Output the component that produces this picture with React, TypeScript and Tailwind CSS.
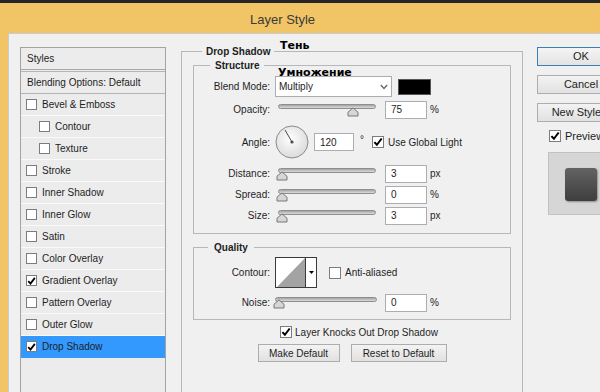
import React from "react";

const Check = ({ checked, size = 12 }: { checked?: boolean; size?: number }) => (
  <span
    className={`flex shrink-0 items-center justify-center border border-[#7c7c7c] bg-white ${
      size === 11 ? "h-[11px] w-[11px]" : "h-[12px] w-[12px]"
    }`}
  >
    {checked && (
      <svg width="10" height="10" viewBox="0 0 10 10">
        <path d="M1.4 5.1 L3.9 7.8 L8.7 1.5" fill="none" stroke="#000" strokeWidth="2" />
      </svg>
    )}
  </span>
);

const Slider = ({ pos, wide }: { pos: number; wide?: boolean }) => (
  <div className={`relative h-[13px] ${wide ? "w-[102px]" : "w-[98px]"}`}>
    <div className="mt-[1px] h-[5px] rounded-full border border-[#8e8e8e] bg-gradient-to-b from-[#a4a4a4] to-[#dcdcdc]" />
    <svg className="absolute top-[3px]" style={{ left: pos }} width="12" height="10" viewBox="0 0 12 10">
      <path d="M1 9 L1 5.2 L6 0.9 L11 5.2 L11 9 Z" fill="#d6d6d6" stroke="#777" strokeWidth="1" strokeLinejoin="round" />
    </svg>
  </div>
);

const Field = ({ value, wide }: { value: string; wide?: boolean }) => (
  <div
    className={`flex h-[18px] items-center border border-[#abadb3] bg-white pl-[5px] ${
      wide ? "w-[42px]" : "w-[40px]"
    }`}
  >
    {value}
  </div>
);

const Row = ({ label, className = "", children }: { label: string; className?: string; children: React.ReactNode }) => (
  <div className={`flex items-center ${className}`}>
    <div className="w-[76px] text-right">{label}</div>
    <div className="ml-[5px] flex items-center">{children}</div>
  </div>
);

const SliderRow = ({ label, pos, value, unit }: { label: string; pos: number; value: string; unit: string }) => (
  <Row label={label} className="h-[21px]">
    <div className="ml-[3px]">
      <Slider pos={pos} />
    </div>
    <div className="ml-[9px]">
      <Field value={value} wide />
    </div>
    <span className="ml-[3px]">{unit}</span>
  </Row>
);

const items = [
  { label: "Bevel & Emboss" },
  { label: "Contour", indent: true },
  { label: "Texture", indent: true },
  { label: "Stroke" },
  { label: "Inner Shadow" },
  { label: "Inner Glow" },
  { label: "Satin" },
  { label: "Color Overlay" },
  { label: "Gradient Overlay", checked: true },
  { label: "Pattern Overlay" },
  { label: "Outer Glow" },
  { label: "Drop Shadow", checked: true, active: true },
];

const StylesList = () => (
  <div className="ml-[11px] mt-[13px] h-[360px] w-[146px] shrink-0 border border-[#a3a3a3] bg-[#ececec]">
    <div className="flex h-[22px] items-center border-b border-[#a8a8a8] pl-[6px]">Styles</div>
    <div className="mt-[1px] flex h-[23px] items-center border-y border-[#b4b4b4] pl-[6px]">
      Blending Options: Default
    </div>
    {items.map((it) => (
      <div
        key={it.label}
        className={`flex h-[22px] items-center gap-[5px] border-b ${
          it.active ? "border-[#3399ff] bg-[#3399ff]" : "border-[#fafafa]"
        } ${it.indent ? "pl-[18px]" : "pl-[5px]"}`}
      >
        <Check checked={it.checked} size={11} />
        <span>{it.label}</span>
      </div>
    ))}
  </div>
);

const Dial = () => (
  <svg width="34" height="34" viewBox="0 0 34 34">
    <defs>
      <radialGradient id="dialg" cx="0.45" cy="0.4" r="0.65">
        <stop offset="0" stopColor="#ffffff" />
        <stop offset="1" stopColor="#d8d8d8" />
      </radialGradient>
    </defs>
    <circle cx="17" cy="17" r="16" fill="url(#dialg)" stroke="#8a8a8a" />
    <line x1="17" y1="17" x2="10" y2="5" stroke="#4a4a4a" strokeWidth="1" />
    <circle cx="17" cy="17" r="1.6" fill="#4a4a4a" />
  </svg>
);

const Middle = () => (
  <div className="ml-[15px] mt-[11px] w-[342px] shrink-0">
    <fieldset className="h-[360px] w-[342px] border border-[#b7b7b7]">
      <legend className="ml-[20px] px-[4px] font-bold leading-[13px]">Drop Shadow</legend>
      <fieldset className="ml-[11px] mt-[1px] w-[318px] border border-[#b7b7b7] pb-[7px]">
        <legend className="ml-[16px] px-[5px] font-bold leading-[13px]">Structure</legend>
        <Row label="Blend Mode:" className="mt-[4px] h-[21px]">
          <div className="flex h-[21px] w-[117px] items-center justify-between border border-[#abadb3] bg-white pl-[3px] pr-[3px]">
            <span>Multiply</span>
            <svg width="8" height="6" viewBox="0 0 8 6">
              <polyline points="0.8,1 4,4.4 7.2,1" fill="none" stroke="#6a6a6a" strokeWidth="1.4" />
            </svg>
          </div>
          <div className="ml-[6px] h-[16px] w-[33px] border border-[#555] bg-black" />
        </Row>
        <div className="mt-[2px]">
          <SliderRow label="Opacity:" pos={69} value="75" unit="%" />
        </div>
        <Row label="Angle:" className="mt-[4px] h-[36px]">
          <Dial />
          <div className="ml-[5px]">
            <Field value="120" />
          </div>
          <span className="ml-[6px] self-start pt-[8px]">°</span>
          <div className="ml-[8px]">
            <Check checked />
          </div>
          <span className="ml-[4px]">Use Global Light</span>
        </Row>
        <div className="mt-[3px]">
          <SliderRow label="Distance:" pos={-2} value="3" unit="px" />
          <SliderRow label="Spread:" pos={-2} value="0" unit="%" />
          <SliderRow label="Size:" pos={-2} value="3" unit="px" />
        </div>
      </fieldset>

      <fieldset className="ml-[11px] mt-[7px] w-[318px] border border-[#b7b7b7] pb-[6px]">
        <legend className="ml-[14px] px-[6px] font-bold leading-[13px]">Quality</legend>
        <Row label="Contour:" className="mt-[3px] h-[31px]">
          <div className="flex h-[31px] w-[42px] border border-[#3a3a3a] bg-white">
            <svg width="29" height="29" viewBox="0 0 29 29">
              <polygon points="1,29 29,0 29,29" fill="#a3a3a3" />
            </svg>
            <div className="flex w-[11px] items-center justify-center border-l border-[#3a3a3a]">
              <svg width="5" height="3" viewBox="0 0 5 3">
                <polygon points="0,0 5,0 2.5,3" fill="#000" />
              </svg>
            </div>
          </div>
          <div className="ml-[12px]">
            <Check />
          </div>
          <span className="ml-[4px]">Anti-aliased</span>
        </Row>
        <Row label="Noise:" className="mt-[4px] h-[21px]">
          <Slider pos={-2} wide />
          <div className="ml-[8px]">
            <Field value="0" wide />
          </div>
          <span className="ml-[3px]">%</span>
        </Row>
      </fieldset>

      <div className="mt-[6px] flex h-[12px] items-center justify-center pl-[14px]">
        <Check checked />
        <span className="ml-[3px]">Layer Knocks Out Drop Shadow</span>
      </div>
      <div className="mt-[6px] flex justify-center gap-[11px]">
        <button className="h-[18px] w-[82px] border border-[#adadad] bg-gradient-to-b from-[#f3f3f3] to-[#e1e1e1]">
          Make Default
        </button>
        <button className="h-[18px] w-[96px] border border-[#adadad] bg-gradient-to-b from-[#f3f3f3] to-[#e1e1e1]">
          Reset to Default
        </button>
      </div>
    </fieldset>
  </div>
);

const RightCol = () => (
  <div className="ml-[14px] mt-[13px] flex w-[88px] shrink-0 flex-col text-[11px]">
    <button className="h-[19px] w-[88px] border border-[#3c7fb1] bg-gradient-to-b from-[#f4f4f4] to-[#e3e3e3]">OK</button>
    <button className="mt-[9px] h-[19px] w-[88px] border border-[#adadad] bg-gradient-to-b from-[#f3f3f3] to-[#e1e1e1]">
      Cancel
    </button>
    <button className="mt-[9px] h-[19px] w-[88px] border border-[#adadad] bg-gradient-to-b from-[#f3f3f3] to-[#e1e1e1]">
      New Style...
    </button>
    <div className="ml-[12px] mt-[8px] flex h-[12px] items-center">
      <Check checked />
      <span className="ml-[4px]">Preview</span>
    </div>
    <div className="ml-[11px] mt-[10px] h-[63px] w-[80px] border border-[#c2c2c2] bg-[#d6d6d6] pl-[16px] pt-[15px]">
      <div className="h-[33px] w-[32px] rounded-[3px] bg-gradient-to-b from-[#636363] to-[#3e3e3e] shadow-[1px_1px_2px_rgba(0,0,0,0.35)]" />
    </div>
  </div>
);

export default function App() {
  return (
    <div className="relative h-[392px] w-[600px] overflow-hidden bg-[#f1c566] font-['Liberation_Sans',Arial,sans-serif] text-[10px] leading-[13px] text-[#1e1e1e]">
      <div className="h-[3px] bg-[#262626]" />
      <div className="h-[30px] pl-[250px] pt-[9px] text-[13px] leading-[15px] text-[#3a3a3a]">Layer Style</div>
      <div className="ml-[8px] flex h-[359px] border-l border-t border-[#c6cdd4] bg-[#f0f0f0]">
        <StylesList />
        <Middle />
        <RightCol />
      </div>
      <span className="absolute left-[280px] top-[39px] font-['DejaVu_Sans',sans-serif] text-[11px] font-bold leading-[13px] text-black">
        Тень
      </span>
      <span className="absolute left-[278px] top-[66px] font-['DejaVu_Sans',sans-serif] text-[11px] font-bold leading-[13px] text-black">
        Умножение
      </span>
    </div>
  );
}
